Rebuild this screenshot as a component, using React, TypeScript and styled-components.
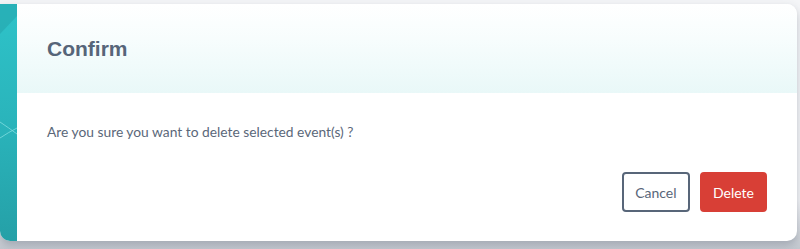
import React from "react";
import styled, { createGlobalStyle } from "styled-components";

const GlobalStyle = createGlobalStyle`
  html, body {
    margin: 0;
    padding: 0;
    background: #eef0f3;
  }
  body {
    font-family: "Lato", "Liberation Sans", sans-serif;
  }
`;

const Page = styled.div`
  width: 800px;
  height: 249px;
  padding-top: 4px;
  box-sizing: border-box;
  overflow: hidden;
  background: linear-gradient(to bottom, #f4f5f7 0px, #f4f5f7 200px, #c3c8cf 249px);
`;

const Modal = styled.div`
  width: 797px;
  height: 237px;
  display: flex;
  border-radius: 0 10px 10px 10px;
  overflow: hidden;
  background: #fff;
  box-shadow: 0 4px 8px rgba(70, 80, 100, 0.3);
`;

const Strip = styled.div`
  width: 17px;
  flex-shrink: 0;
  background: linear-gradient(to bottom, #2ec3c9 0%, #2ab4bb 50%, #25a0a7 100%);
  svg {
    display: block;
  }
`;

const Content = styled.div`
  flex: 1;
  display: flex;
  flex-direction: column;
`;

const Header = styled.div`
  height: 89px;
  box-sizing: border-box;
  padding: 0 30px;
  display: flex;
  align-items: center;
  background: linear-gradient(to bottom, #ffffff 0%, #f7fdfd 40%, #e9f8f8 100%);
`;

const Title = styled.h2`
  margin: 0;
  font-family: "Liberation Sans", Arial, sans-serif;
  font-weight: 700;
  font-size: 21px;
  color: #566579;
`;

const Body = styled.div`
  flex: 1;
  padding: 31px 30px 29px;
  display: flex;
  flex-direction: column;
  justify-content: space-between;
`;

const Message = styled.p`
  margin: 0;
  font-size: 13.8px;
  color: #5a6779;
  line-height: 16px;
`;

const Actions = styled.div`
  display: flex;
  justify-content: flex-end;
  gap: 10px;
`;

const Button = styled.button<{ $variant: "outline" | "danger" }>`
  height: 40px;
  padding: 0 ${(p) => (p.$variant === "danger" ? "11px" : "11.5px")};
  box-sizing: border-box;
  border-radius: 4px;
  font-family: "Lato", "Liberation Sans", sans-serif;
  font-size: 14px;
  cursor: pointer;
  border: 2px solid ${(p) => (p.$variant === "danger" ? "#d83f36" : "#586679")};
  background: ${(p) => (p.$variant === "danger" ? "#d83f36" : "#fff")};
  color: ${(p) => (p.$variant === "danger" ? "#fff" : "#586679")};
`;

const StripArt = () => (
  <svg width="17" height="237" viewBox="0 0 17 237">
    <polygon points="0,0 17,0 17,12 0,30" fill="#27a9b0" opacity="0.7" />
    <path d="M0 118 Q9 124 17 130" stroke="#7fdde0" strokeWidth="1" fill="none" opacity="0.8" />
    <path d="M0 134 Q9 128 17 124" stroke="#7fdde0" strokeWidth="1" fill="none" opacity="0.8" />
  </svg>
);

export default function App() {
  return (
    <>
      <GlobalStyle />
      <Page>
        <Modal>
          <Strip>
            <StripArt />
          </Strip>
          <Content>
            <Header>
              <Title>Confirm</Title>
            </Header>
            <Body>
              <Message>Are you sure you want to delete selected event(s) ?</Message>
              <Actions>
                <Button $variant="outline">Cancel</Button>
                <Button $variant="danger">Delete</Button>
              </Actions>
            </Body>
          </Content>
        </Modal>
      </Page>
    </>
  );
}
